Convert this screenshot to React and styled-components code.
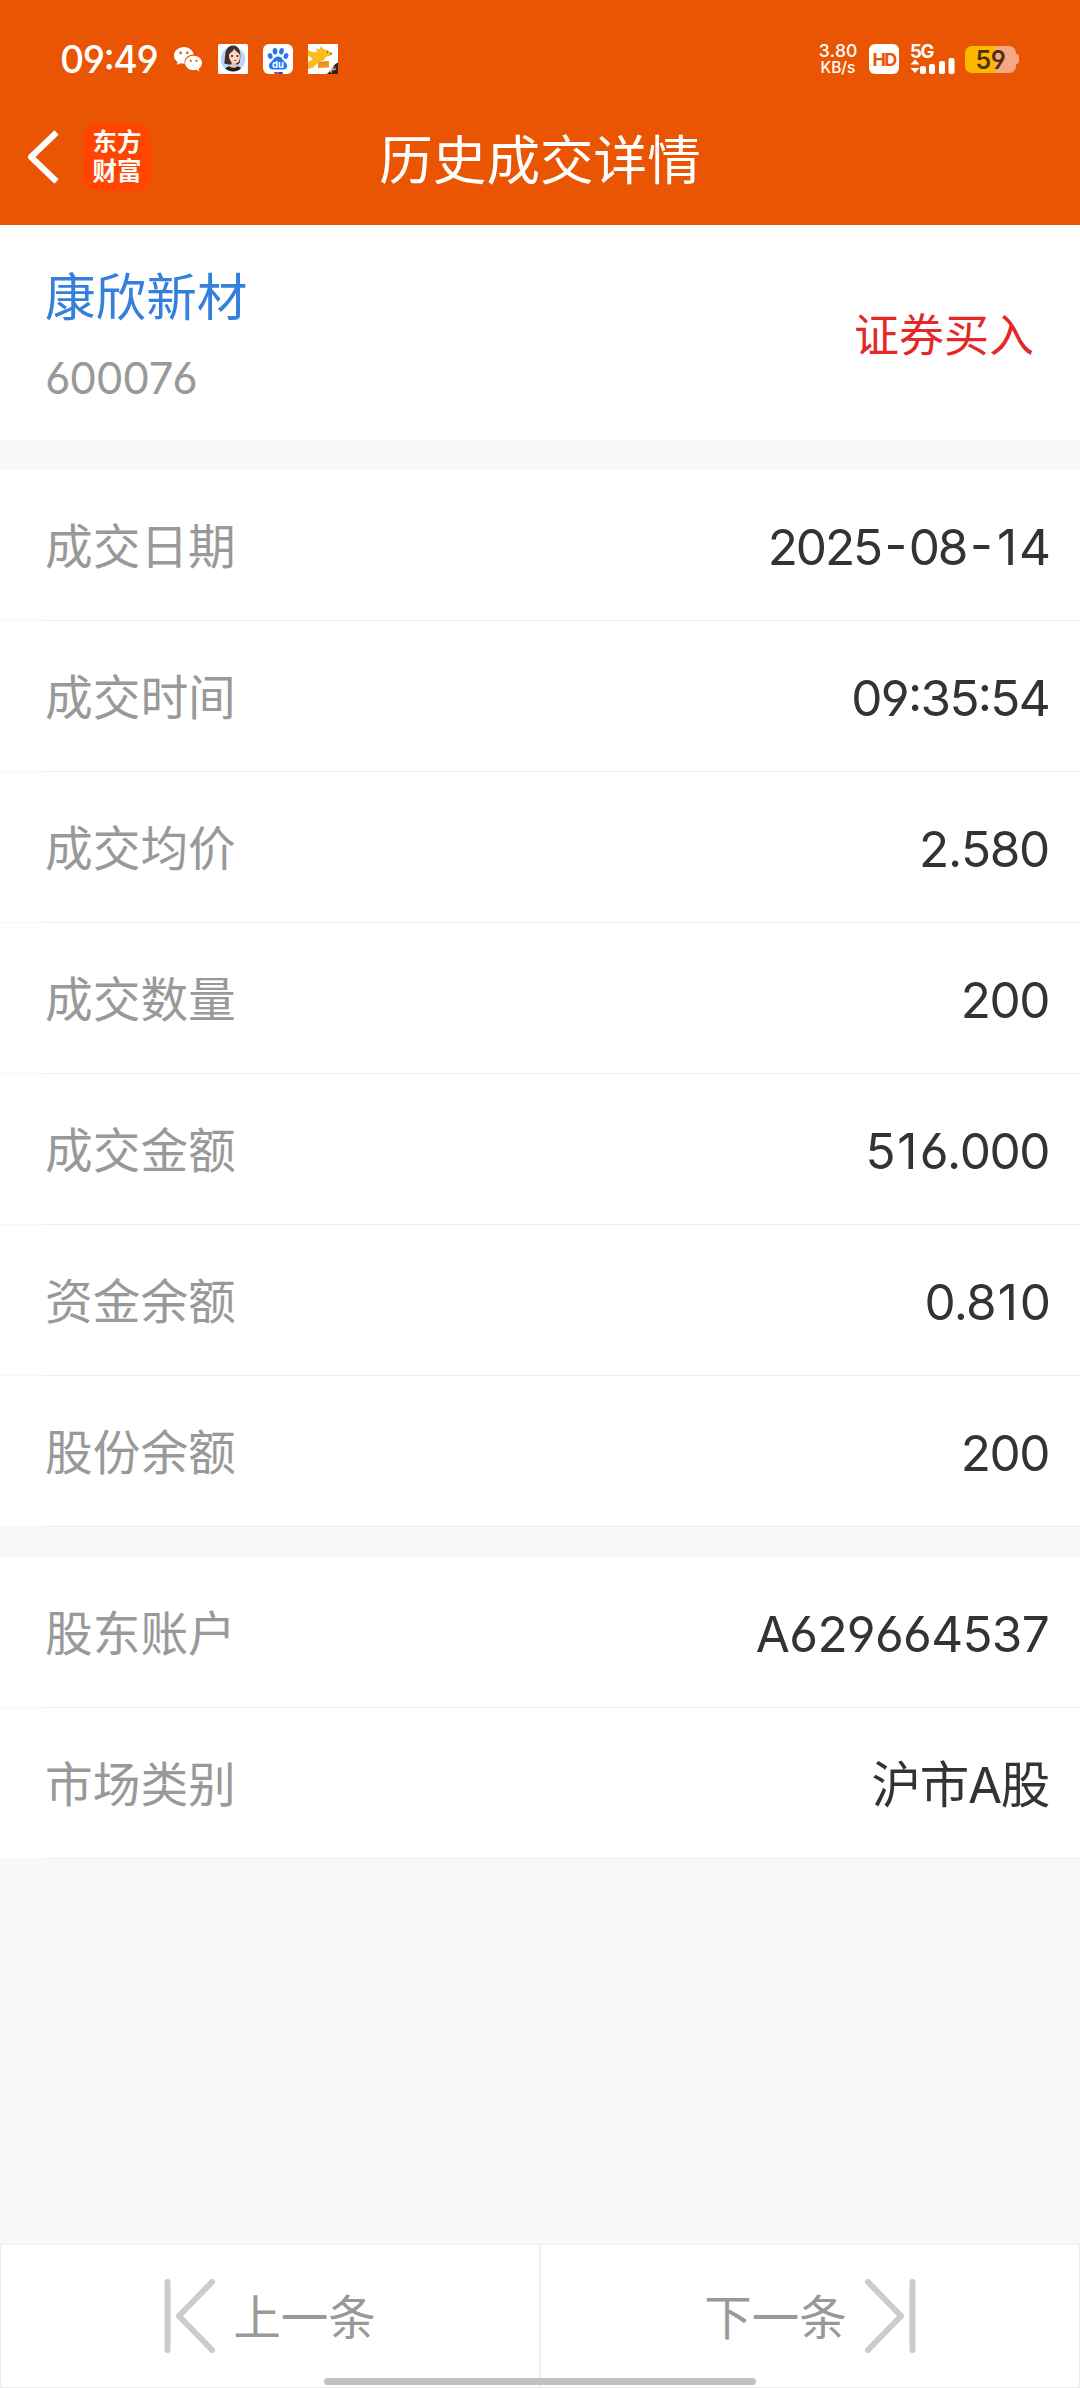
import React from 'react';
import styled, { createGlobalStyle } from 'styled-components';

const Global = createGlobalStyle`
  body { margin: 0; background: #f7f8fa; }
  * { box-sizing: border-box; }
`;
const latin = `Inter, 'Noto Sans CJK SC', sans-serif`;

const Page = styled.div`
  width: 1080px;
  height: 2388px;
  display: flex;
  flex-direction: column;
  background: #f7f8fa;
  font-family: ${latin};
  font-feature-settings: 'cv03', 'cv04', 'case';
  font-kerning: none;
  overflow: hidden;
`;
const Header = styled.header`
  height: 225px;
  flex: none;
  background: #ea5504;
  color: #fff;
`;
const StatusBar = styled.div`
  height: 93px;
  padding: 26px 61px 0 60px;
  display: flex;
  justify-content: space-between;
`;
const StatusGroup = styled.div`
  height: 66px;
  display: flex;
  align-items: center;
`;
const Clock = styled.div`
  width: 97px;
  margin-right: 17px;
  padding-top: 1px;
  font-size: 37.5px;
  line-height: 66px;
  font-weight: 450;
  letter-spacing: -1.5px;
  white-space: nowrap;
`;
const AppIcon = styled.svg`
  width: 30px;
  height: 30px;
  margin-left: 15px;
  flex: none;
`;
const ChatIcon = styled.svg`
  width: 29px;
  height: 25px;
  flex: none;
`;
const Speed = styled.div`
  width: 40px;
  white-space: nowrap;
  display: flex;
  flex-direction: column;
  align-items: center;
`;
const SpeedValue = styled.span`
  font-size: ${p => p.$size}px;
  line-height: 17px;
  font-weight: 500;
  font-feature-settings: normal;
`;
const HdBadge = styled.div`
  width: 30px;
  height: 30px;
  margin-left: 11px;
  border-radius: 6px;
  background: #fff;
  color: #ea5504;
  font-size: 18px;
  line-height: 31px;
  font-weight: 700;
  display: flex;
  justify-content: center;
  letter-spacing: -1.6px;
`;
const Network = styled.div`
  width: 46px;
  height: 30px;
  margin-left: 11px;
`;
const NetworkName = styled.div`
  height: 14px;
  font-size: 18.5px;
  line-height: 14px;
  font-weight: 700;
  letter-spacing: -1.2px;
`;
const Bars = styled.svg`
  display: block;
  width: 46px;
  height: 16px;
`;
const Battery = styled.div`
  width: 51px;
  height: 27px;
  margin-left: 9px;
  border-radius: 7px;
  background: linear-gradient(90deg, #fdb900 0 30px, #f6a884 30px);
  color: #52300c;
  font-size: 25px;
  line-height: 29px;
  font-weight: 600;
  text-align: center;
  letter-spacing: -0.4px;
`;
const BatteryCap = styled.div`
  width: 3px;
  height: 10px;
  border-radius: 0 4px 4px 0;
  background: #f6a884;
`;
const NavBar = styled.div`
  height: 132px;
  display: grid;
  grid-template-columns: 330px 420px 330px;
`;
const NavLeft = styled.div`
  display: flex;
  align-items: flex-start;
  padding: 31px 0 0 27px;
`;
const BackIcon = styled.svg`
  width: 32px;
  height: 54px;
  margin-top: 6px;
`;
const Brand = styled.div`
  width: 68px;
  height: 67px;
  margin-left: 24px;
  padding-top: 4px;
  border-radius: 15px;
  background: #ff4500;
  font-size: 24.5px;
  line-height: 29px;
  font-weight: 700;
  text-align: center;
`;
const Title = styled.h1`
  margin: 0;
  padding-top: 2px;
  font-size: 53.6px;
  line-height: 132px;
  font-weight: 400;
  text-align: center;
  white-space: nowrap;
`;
const Summary = styled.section`
  height: 215px;
  flex: none;
  margin-bottom: 30px;
  padding: 7px 46px 0 45px;
  display: flex;
  justify-content: space-between;
  align-items: center;
  background: #fff;
`;
const StockName = styled.div`
  padding-top: 4px;
  font-size: 50.6px;
  line-height: 70px;
  color: #3480dc;
`;
const StockCode = styled.div`
  margin-top: 9px;
  font-size: 44px;
  line-height: 72px;
  letter-spacing: -1.3px;
  color: #999;
`;
const Action = styled.div`
  font-size: 45px;
  line-height: 66px;
  color: #e42828;
`;
const Group = styled.section`
  flex: none;
  margin-bottom: 30px;
  background: #fff;
`;
const Row = styled.div`
  height: 151px;
  padding: 3px 31px 0 45px;
  display: flex;
  justify-content: space-between;
  align-items: center;
  background: linear-gradient(90deg, #f8f8f8 45px, #ececec 45px) bottom / 100% 1px no-repeat;
`;
const Label = styled.span`
  font-size: 47.7px;
  line-height: 70px;
  color: #999;
`;
const Value = styled.span`
  font-size: 49.5px;
  line-height: 70px;
  letter-spacing: ${p => p.$track}px;
  color: #333;
  white-space: nowrap;
`;
const Padded = styled.span`
  padding: ${p => (p.$char === '1' ? '0 4px 0 3px' : '0 3.5px')};
`;
const Pager = styled.nav`
  height: 144px;
  flex: none;
  margin-top: auto;
  display: grid;
  grid-template-columns: 1fr 1fr;
  position: relative;
`;
const PagerButton = styled.button`
  margin: 0;
  padding: 0;
  display: flex;
  justify-content: center;
  align-items: center;
  gap: 18px;
  border: 1px solid #eee;
  background: #fff;
  color: #999;
  font: 400 47.5px/70px ${latin};
`;
const PagerLabel = styled.span`
  padding-top: 3px;
`;
const PagerIcon = styled.svg`
  width: 51px;
  height: 74px;
`;
const HomeIndicator = styled.div`
  position: absolute;
  left: 324px;
  bottom: 3px;
  width: 432px;
  height: 7px;
  border-radius: 4px;
  background: #c1c1c1;
`;

const trade = [
  ['成交日期', '2025-08-14', -2.1],
  ['成交时间', '09:35:54', -1.7],
  ['成交均价', '2.580', -1.3],
  ['成交数量', '200', -1.5],
  ['成交金额', '516.000', -1.5],
  ['资金余额', '0.810', -2],
  ['股份余额', '200', -1.5],
];
const account = [
  ['股东账户', 'A629664537', -0.7],
  ['市场类别', '沪市A股', -1.3],
];

const spaced = text =>
  text.split(/([1-])/).map((part, i) =>
    part === '1' || part === '-' ? <Padded key={i} $char={part}>{part}</Padded> : part
  );

const Rows = ({ items }) => (
  <Group>
    {items.map(([label, value, track]) => (
      <Row key={label}>
        <Label>{label}</Label>
        <Value $track={track}>{spaced(value)}</Value>
      </Row>
    ))}
  </Group>
);

export default function App() {
  return (
    <Page>
      <Global />
      <Header>
        <StatusBar>
          <StatusGroup>
            <Clock>09:49</Clock>
            <ChatIcon viewBox="0 0 29 25">
              <path fill="#fff" d="M10 0C4.400 0 0 3.800 0 8.500c0 2.700 1.400 5 3.700 6.500l-.9 3 3.500-1.800c1.100.3 2.400.5 3.700.5h.6C9.800 11.400 14 7.400 19.700 7.500 18.800 3.200 14.800 0 10 0z" />
              <path fill="#fff" d="M19.600 8.800c-4.700 0-8.500 3.200-8.500 7.200s3.800 7.200 8.500 7.200c1 0 2-.2 2.900-.4l2.900 1.600-.8-2.600c2.100-1.300 3.400-3.400 3.400-5.800 0-4-3.700-7.200-8.400-7.200z" />
              <g fill="#ea5504">
                <circle cx="6.700" cy="5.900" r="1.300" /><circle cx="13.300" cy="5.900" r="1.300" />
                <circle cx="16.800" cy="13.800" r="1.100" /><circle cx="22.500" cy="13.800" r="1.100" />
              </g>
            </ChatIcon>
            <AppIcon viewBox="0 0 30 30">
              <rect width="30" height="30" rx="1.500" fill="#fff" />
              <circle cx="15" cy="15" r="12.300" fill="#b9d7f5" />
              <path fill="#3f2e2a" d="M16 1.500C10.500 1 7.500 5 7.200 11L6.300 19.500l4.500 1h9l2-2c.3-3 .7-6 .5-9-.5-4.500-3-7.600-6.300-8z" />
              <path fill="#f0bda5" d="M13.500 17h4.500v5l2.500 1.500-4.500 2-4.500-2 2-1.500z" />
              <path fill="#fbd5c0" d="M16 4.500c-1 3.500-4 4-5 6-.3 4.500 2 9 6 9 3.600 0 5.200-3.500 5-8C21.500 8.500 18 8 16 4.500z" />
              <path fill="#231c20" d="M7 24.500c2-2 4-2 4.500-2.300 2 2.200 6 2.200 8 0 1 .3 2.500.8 3.500 2.300-4.500 4-11.500 4-16 0z" />
              <circle cx="14" cy="12" r="1.100" fill="#30201f" /><circle cx="19.500" cy="12" r="1.100" fill="#30201f" />
              <path d="M16 16.500h2.300" stroke="#c24b45" strokeWidth="1" />
            </AppIcon>
            <AppIcon viewBox="0 0 30 30">
              <rect width="30" height="30" rx="6" fill="#fff" />
              <g fill="#2577ee">
                <ellipse cx="7.200" cy="12" rx="2.300" ry="3" transform="rotate(-20 7.200 12)" />
                <ellipse cx="12" cy="7.200" rx="2.300" ry="3.300" />
                <ellipse cx="18.500" cy="7.200" rx="2.300" ry="3.300" transform="rotate(10 18.500 7.200)" />
                <ellipse cx="23" cy="12" rx="2.300" ry="3" transform="rotate(20 23 12)" />
                <path d="M15 12.500c-4 0-4.800 4-7.500 6-3 2.700-1.300 7 2 7h11c3.500 0 5-4.300 2-7-2.700-2-3.500-6-7.500-6z" />
              </g>
              <path d="M11 28h4.500v2h-4z" fill="#e03b2c" /><path d="M15.500 28H20l-.5 2h-4z" fill="#2947d8" />
              <text x="15" y="23.600" textAnchor="middle" fontSize="9.500" fontWeight="700" fontFamily="Inter, sans-serif" fill="#fff">du</text>
            </AppIcon>
            <AppIcon viewBox="0 0 30 30">
              <rect width="30" height="30" fill="#fff" />
              <path fill="#f9be1c" d="M0 6c3 2 6 2.500 9 2l-1.500-4 3.500 2 2-4 3 3.500c3 0 5 1 7 3.500l.8 2c-2 1.500-4.300 1.300-6 1.500-1 2-1 3.500-3 4.500L9 19.500 4.500 24 0 25v-7l5-3-5-3.500z" />
              <path fill="#f6921e" d="M10 18.500l11-1.500v6.500l-11 .5z" />
              <path fill="#dd7a14" d="M10 18.500l4 1 7-2.500z" />
              <path fill="#352118" d="M30 18.500V30H18.500c3-.8 3-4 5.200-5.200C24.800 22 27 20 30 18.500z" />
              <text x="23" y="29" transform="rotate(-38 23 29)" fontSize="5" fontWeight="700" fontFamily="Inter, sans-serif" fill="#fff">PC</text>
              <circle cx="19.500" cy="8" r=".7" fill="#503514" /><circle cx="23.300" cy="9.600" r=".8" fill="#503514" />
            </AppIcon>
          </StatusGroup>
          <StatusGroup>
            <Speed>
              <SpeedValue $size={17.5}>3.80</SpeedValue>
              <SpeedValue $size={15.5}>KB/s</SpeedValue>
            </Speed>
            <HdBadge>HD</HdBadge>
            <Network>
              <NetworkName>5G</NetworkName>
              <Bars viewBox="0 0 46 16" fill="#fff">
                <path d="M0.500 6.500L5 1.500l4.500 5zM0.500 10h9L5 15z" />
                <rect x="10" y="8" width="6" height="8" rx="1.800" />
                <rect x="19" y="6" width="6" height="10" rx="1.800" />
                <rect x="29" y="3" width="6" height="13" rx="1.800" />
                <rect x="38.500" y="0" width="6" height="16" rx="1.800" />
              </Bars>
            </Network>
            <Battery>59</Battery>
            <BatteryCap />
          </StatusGroup>
        </StatusBar>
        <NavBar>
          <NavLeft>
            <BackIcon viewBox="0 0 32 54">
              <path d="M29.500 2.500L4 27l25.500 24.500" fill="none" stroke="#fff" strokeWidth="6" strokeLinejoin="round" />
            </BackIcon>
            <Brand>东方<br />财富</Brand>
          </NavLeft>
          <Title>历史成交详情</Title>
        </NavBar>
      </Header>
      <Summary>
        <div>
          <StockName>康欣新材</StockName>
          <StockCode>600076</StockCode>
        </div>
        <Action>证券买入</Action>
      </Summary>
      <Rows items={trade} />
      <Rows items={account} />
      <Pager>
        <PagerButton>
          <PagerIcon viewBox="0 0 51 74" fill="none" stroke="#ccc" strokeWidth="6" strokeLinecap="round" strokeLinejoin="round">
            <path d="M3.500 3v68M48 3L15 37l33 34" />
          </PagerIcon>
          <PagerLabel>上一条</PagerLabel>
        </PagerButton>
        <PagerButton>
          <PagerLabel>下一条</PagerLabel>
          <PagerIcon viewBox="0 0 51 74" fill="none" stroke="#ccc" strokeWidth="6" strokeLinecap="round" strokeLinejoin="round">
            <path d="M47.500 3v68M3 3l33 34L3 71" />
          </PagerIcon>
        </PagerButton>
        <HomeIndicator />
      </Pager>
    </Page>
  );
}
